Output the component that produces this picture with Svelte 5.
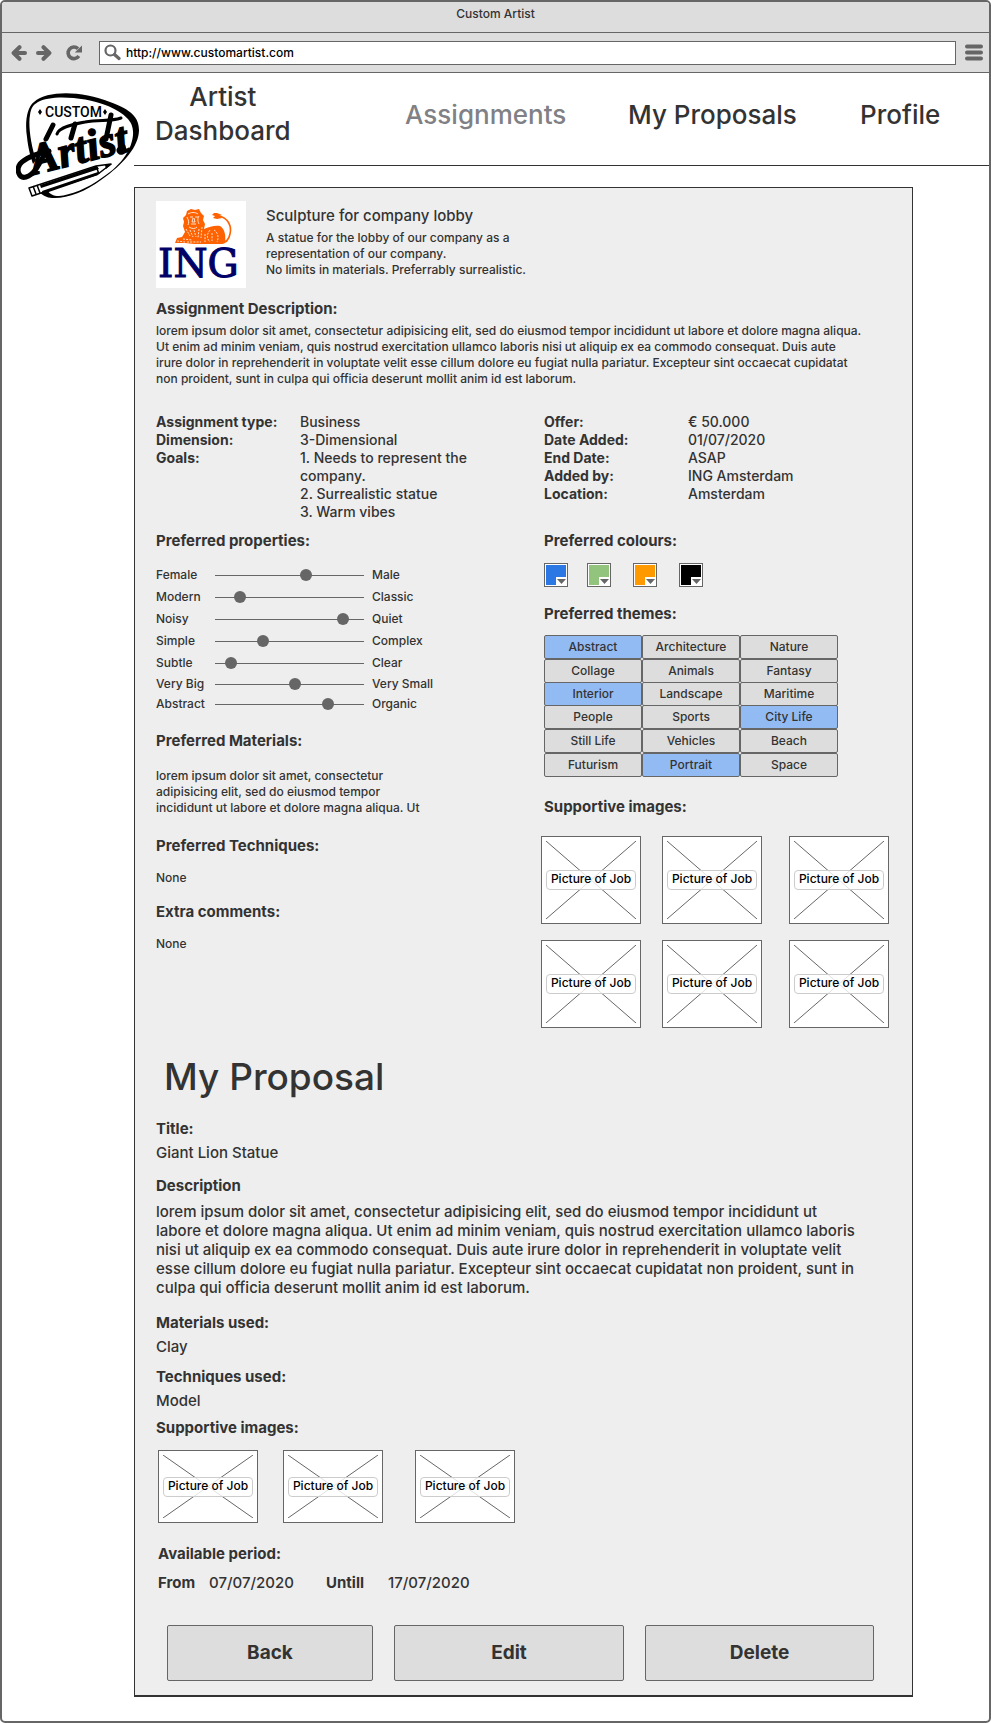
<script>
  const nav = [
    { label: 'Artist\nDashboard' },
    { label: 'Assignments', current: true },
    { label: 'My Proposals' },
    { label: 'Profile' }
  ];

  const details = [
    ['Assignment type:', 'Business'],
    ['Dimension:', '3-Dimensional'],
    ['Goals:', '1. Needs to represent the\ncompany.\n2. Surrealistic statue\n3. Warm vibes']
  ];

  const facts = [
    ['Offer:', '€ 50.000'],
    ['Date Added:', '01/07/2020'],
    ['End Date:', 'ASAP'],
    ['Added by:', 'ING Amsterdam'],
    ['Location:', 'Amsterdam']
  ];

  const sliders = $state([
    { from: 'Female', to: 'Male', value: 62 },
    { from: 'Modern', to: 'Classic', value: 14 },
    { from: 'Noisy', to: 'Quiet', value: 89 },
    { from: 'Simple', to: 'Complex', value: 31 },
    { from: 'Subtle', to: 'Clear', value: 7 },
    { from: 'Very Big', to: 'Very Small', value: 54, tight: true },
    { from: 'Abstract', to: 'Organic', value: 78, tight: true }
  ]);

  const colours = [
    { name: 'Blue', hex: '#2b78e4' },
    { name: 'Green', hex: '#93c47d' },
    { name: 'Orange', hex: '#ff9900' },
    { name: 'Black', hex: '#000000' }
  ];

  const themes = [
    'Abstract', 'Architecture', 'Nature',
    'Collage', 'Animals', 'Fantasy',
    'Interior', 'Landscape', 'Maritime',
    'People', 'Sports', 'City Life',
    'Still Life', 'Vehicles', 'Beach',
    'Futurism', 'Portrait', 'Space'
  ];
  let chosen = $state(['Abstract', 'Interior', 'City Life', 'Portrait']);

  function toggle(theme) {
    chosen = chosen.includes(theme) ? chosen.filter((t) => t !== theme) : [...chosen, theme];
  }

  const brief =
    'lorem ipsum dolor sit amet, consectetur adipisicing elit, sed do eiusmod tempor incididunt ut labore et dolore magna aliqua.\nUt enim ad minim veniam, quis nostrud exercitation ullamco laboris nisi ut aliquip ex ea commodo consequat. Duis aute\nirure dolor in reprehenderit in voluptate velit esse cillum dolore eu fugiat nulla pariatur. Excepteur sint occaecat cupidatat\nnon proident, sunt in culpa qui officia deserunt mollit anim id est laborum.';

  const pitch =
    'lorem ipsum dolor sit amet, consectetur adipisicing elit, sed do eiusmod tempor incididunt ut\nlabore et dolore magna aliqua. Ut enim ad minim veniam, quis nostrud exercitation ullamco laboris\nnisi ut aliquip ex ea commodo consequat. Duis aute irure dolor in reprehenderit in voluptate velit\nesse cillum dolore eu fugiat nulla pariatur. Excepteur sint occaecat cupidatat non proident, sunt in\nculpa qui officia deserunt mollit anim id est laborum.';

  let url = $state('http://www.customartist.com');
</script>

{#snippet picture(low)}
  <div class="picture" class:low>
    <svg class="cross" viewBox="0 0 90 78" preserveAspectRatio="none" aria-hidden="true">
      <path d="M0 0L90 78M90 0L0 78" />
    </svg>
    <span>Picture of Job</span>
  </div>
{/snippet}

<div class="window">
  <div class="titlebar">Custom Artist</div>
  <div class="toolbar">
    <button class="tool" aria-label="Back in history">
      <svg width="16" height="16" viewBox="0 0 16 16"><path class="line" d="M8.500 2.200L2.600 8l5.900 5.800M3 8h11" /></svg>
    </button>
    <button class="tool" aria-label="Forward in history">
      <svg width="16" height="16" viewBox="0 0 16 16"><path class="line" d="M7.500 2.200L13.400 8l-5.900 5.800M13 8H2" /></svg>
    </button>
    <button class="tool reload" aria-label="Reload">
      <svg width="16" height="16" viewBox="0 0 16 16">
        <path class="line thin" d="M12.800 11A5.800 5.800 0 1 1 12 3.700" />
        <path class="solid" d="M16 .5V7.500H8.800z" />
      </svg>
    </button>
    <label class="address">
      <svg width="17" height="17" viewBox="0 0 17 17" aria-hidden="true">
        <circle cx="6.500" cy="6.500" r="5" fill="none" stroke="#666" stroke-width="2.200" />
        <path d="M10.500 10.500l4.500 4" stroke="#666" stroke-width="3.200" stroke-linecap="round" />
      </svg>
      <input type="text" aria-label="Address" bind:value={url} />
    </label>
    <button class="tool" aria-label="Menu">
      <svg width="18" height="17" viewBox="0 0 18 17"><path class="bars" d="M2 2.500h14M2 8.500h14M2 14.500h14" /></svg>
    </button>
  </div>

  <div class="page">
    <svg class="logo" width="124" height="108" viewBox="0 0 124 108" role="img" aria-label="Custom Artist">
      <!-- plectrum outline, heavier along the top right and lower left -->
      <path d="M18 11C10 17 9 34 11 46c1 11 4 21 6 27l3-4C15 54 12 34 14 24c1-7 3-10 8-13C34 4 67 5 92 15c19 9 26 16 25 29-1 13-10 29-30 42-16 12-33 18-44 19-6 0-9-2-12-6l-9 1c4 4 9 7 14 7 14 1 33-6 49-18 23-16 38-34 38-50 0-12-7-20-29-28C66 0 32-1 18 11z" />
      <text class="small" x="29" y="26">CUSTOM</text>
      <path d="M24 18l2 3-2 3-2-3zM89 18l2 3-2 3-2-3z" />
      <text class="script" x="17" y="84" transform="rotate(-14 17 84)">Artist</text>
      <!-- swashes around the wordmark -->
      <path class="swash" d="M33 60C24 62 10 66 4 73c-4 6-1 15 6 13 8-2 13-12 19-24" />
      <path class="swash" d="M37 34L30 48M59 33l-4 14M95 24l-5 24" />
      <path class="swash fine" d="M41 43c2-7 17-10 28-12 14-3 25 0 36-4M108 61c0-5-7-5-6-1 1 4 9 3 6-5" />
      <!-- pencil -->
      <path fill="#fff" stroke="#000" stroke-width="1.500" stroke-linejoin="round" d="M13 97L80 75l15-2-13 10-66 22z" />
      <path d="M24 94l57-19 2 3-58 19zM26 100l56-19v3L27 103z" />
      <path fill="none" stroke="#000" stroke-width="1.500" d="M17 95l3 8M21 94l3 8M80 75l3 8" />
      <path d="M89 74l7-1-6 5z" />
    </svg>

    <nav>
      {#each nav as item}
        <div><a href="#top" class:current={item.current} aria-current={item.current ? 'page' : undefined}>{item.label}</a></div>
      {/each}
    </nav>

    <main>
      <section class="summary">
        <svg width="90" height="87" viewBox="0 0 90 87" role="img" aria-label="ING">
          <rect width="90" height="87" fill="#fff" />
          <g fill="#ff6200">
            <path d="M31 10l4-2 4 1 4-1 2 4 3 3-1 4 2 4-1 5c5-2 11-4 16-3 5 3 6 10 5 17l-3 1H38l-9-1H19l2-5 5-1 3-5-2-6 1-4-1-4 3-3z" />
            <path d="M58 12l3 0 5 2-3 1 3 2-5 1-4-1 2-2-3-1z" />
          </g>
          <path fill="none" stroke="#ff6200" stroke-width="1.600" d="M63 15c9 2 13 10 11 18-1 6-5 9-10 9" />
          <g fill="none" stroke="#fff" stroke-width=".8">
            <path d="M32 13c3-2 7-2 10 0M31 16c2 4 2 6 1 8M43 15c-2 3-1 6 0 8M34 16h3M39 16h3M37 17l-1 4h3l-1-4M35 23h5M33 26c3 2 6 2 8 0" />
            <path stroke-dasharray="2 1.200" d="M30 28l4 7M34 29l3 7M38 29l2 7M43 28l-1 9M46 26l-1 11M27 38l9 1M21 40l8 1M31 41h14M54 29c-4 5-3 9 0 12M58 29c4 2 5 8 3 12M49 33v8M56 32v8" />
          </g>
          <text class="brand" x="2" y="76">ING</text>
        </svg>
        <div class="intro">
          <h1>Sculpture for company lobby</h1>
          <p class="text">{'A statue for the lobby of our company as a\nrepresentation of our company.\nNo limits in materials. Preferrably surrealistic.'}</p>
        </div>
      </section>

      <h2 class="mt11">Assignment Description:</h2>
      <p class="text mt4">{brief}</p>

      <div class="columns details">
        {#each [details, facts] as list}
          <dl>
            {#each list as [term, value]}
              <dt>{term}</dt>
              <dd>{value}</dd>
            {/each}
          </dl>
        {/each}
      </div>

      <div class="columns specs">
        <div>
          <h2>Preferred properties:</h2>
          <div class="sliders">
            {#each sliders as s, i}
              <div class="slider" class:tight={s.tight}>
                <label for="slider-{i}">{s.from}</label>
                <input id="slider-{i}" type="range" min="0" max="100" bind:value={s.value} />
                <span>{s.to}</span>
              </div>
            {/each}
          </div>
          <h2 class="mt17">Preferred Materials:</h2>
          <p class="text mt17">{'lorem ipsum dolor sit amet, consectetur\nadipisicing elit, sed do eiusmod tempor\nincididunt ut labore et dolore magna aliqua. Ut'}</p>
          <h2 class="mt20">Preferred Techniques:</h2>
          <p class="text mt14">None</p>
          <h2 class="mt16">Extra comments:</h2>
          <p class="text mt14">None</p>
        </div>

        <div>
          <h2>Preferred colours:</h2>
          <div class="swatches">
            {#each colours as c}
              <button class="swatch" aria-label={c.name}>
                <svg width="20" height="20" viewBox="0 0 20 20">
                  <path fill={c.hex} d="M0 0h20v12H10v8H0z" />
                  <path fill="#666" d="M11 14h9l-4.500 5z" />
                </svg>
              </button>
            {/each}
          </div>
          <h2 class="mt17">Preferred themes:</h2>
          <div class="themes">
            {#each themes as theme}
              <button aria-pressed={chosen.includes(theme)} onclick={() => toggle(theme)}>{theme}</button>
            {/each}
          </div>
          <h2 class="mt20">Supportive images:</h2>
          <div class="gallery">
            {#each Array(6) as _}
              {@render picture(false)}
            {/each}
          </div>
        </div>
      </div>

      <section class="proposal">
        <h1>My Proposal</h1>
        <h2>Title:</h2>
        <p class="large mt4">Giant Lion Statue</p>
        <h2 class="mt14">Description</h2>
        <p class="large mt6">{pitch}</p>
        <h2 class="mt16">Materials used:</h2>
        <p class="large mt4">Clay</p>
        <h2 class="mt11">Techniques used:</h2>
        <p class="large mt4">Model</p>
        <h2 class="mt8">Supportive images:</h2>
        <div class="gallery strip">
          {#each Array(3) as _}
            {@render picture(true)}
          {/each}
        </div>
        <h2 class="period-title">Available period:</h2>
        <div class="period">
          <b>From</b><span>07/07/2020</span>
          <b>Untill</b><span>17/07/2020</span>
        </div>
      </section>

      <div class="actions">
        <button>Back</button>
        <button>Edit</button>
        <button>Delete</button>
      </div>
    </main>
  </div>
</div>

<style>
  :global(body) {
    margin: 0;
    background: #fff;
  }

  .window {
    box-sizing: border-box;
    border: 2px solid #666;
    border-radius: 5px;
    overflow: hidden;
    background: #fff;
    color: #333;
    font: 500 12px/16px Inter, sans-serif;
  }

  h1, h2, p, dl, dd {
    margin: 0;
  }

  button, input {
    font: inherit;
    color: inherit;
  }

  button {
    padding: 0;
    cursor: pointer;
  }

  .titlebar {
    height: 30px;
    line-height: 24px;
    text-align: center;
    background: #ddd;
    border-bottom: 1px solid #666;
  }

  .toolbar {
    display: flex;
    align-items: center;
    gap: 9px;
    height: 39px;
    padding: 0 6px 0 9px;
    background: #ddd;
    border-bottom: 1px solid #666;
  }

  .tool {
    display: flex;
    border: 0;
    background: none;
  }

  .reload {
    margin: 0 8px 0 5px;
  }

  .line {
    fill: none;
    stroke: #666;
    stroke-width: 4;
    stroke-linejoin: round;
    stroke-linecap: round;
  }

  .thin {
    stroke-width: 3.6;
    stroke-linecap: butt;
  }

  .solid {
    fill: #666;
  }

  .bars {
    stroke: #666;
    stroke-width: 4;
    stroke-linecap: round;
  }

  .address {
    display: flex;
    flex: 1;
    align-items: center;
    gap: 5px;
    height: 22px;
    padding-left: 4px;
    border: 1px solid #666;
    background: #fff;
  }

  .address input {
    flex: 1;
    min-width: 0;
    padding: 1px 0 0;
    border: 0;
    outline: 0;
    background: none;
    color: #000;
  }

  .page {
    position: relative;
    padding: 0 0 24px 132px;
  }

  .logo {
    position: absolute;
    left: 14px;
    top: 18px;
  }

  .small {
    font: 500 14px Roboto, sans-serif;
  }

  .script {
    font: italic 700 44px 'Liberation Serif', serif;
    stroke: #000;
    stroke-width: 1.5;
  }

  .brand {
    font: 400 39px 'DejaVu Serif', serif;
    fill: #006;
    stroke: #006;
    stroke-width: 1;
  }

  .swash {
    fill: none;
    stroke: #000;
    stroke-width: 5;
    stroke-linecap: round;
  }

  .fine {
    stroke-width: 3;
  }

  nav {
    display: grid;
    grid-template-columns: 250fr 223fr 232fr 129fr;
    align-items: center;
    height: 92px;
    padding-left: 21px;
    border-bottom: 1px solid #333;
    font-size: 26px;
    line-height: 34px;
  }

  nav div {
    padding-bottom: 8px;
  }

  nav div:first-child {
    padding-bottom: 10px;
  }

  nav a {
    display: inline-block;
    color: #333;
    text-align: center;
    text-decoration: none;
    white-space: pre-line;
  }

  nav a.current {
    color: #808085;
  }

  main {
    margin: 21px 76px 0 0;
    padding: 13px 20px 14px 21px;
    background: #eee;
    border: 1px solid #333;
    border-bottom-width: 2px;
  }

  .summary {
    display: flex;
    gap: 20px;
  }

  .summary h1 {
    padding-top: 2px;
    font-size: 15px;
    font-weight: 500;
    line-height: 26px;
  }

  .intro .text {
    margin-top: 1px;
  }

  .text, .large, dd {
    white-space: pre-line;
  }

  .large {
    font-size: 15px;
    line-height: 19px;
  }

  h2 {
    font-size: 15px;
    font-weight: 700;
    line-height: 20px;
  }

  .mt4 { margin-top: 4px; }
  .mt6 { margin-top: 6px; }
  .mt8 { margin-top: 8px; }
  .mt11 { margin-top: 11px; }
  .mt14 { margin-top: 14px; }
  .mt16 { margin-top: 16px; }
  .mt17 { margin-top: 17px; }
  .mt20 { margin-top: 20px; }

  .columns {
    display: grid;
    grid-template-columns: 388fr 348fr;
  }

  .details {
    margin-top: 26px;
  }

  dl {
    display: grid;
    grid-template-columns: 144px 1fr;
    align-content: start;
    font-size: 14px;
    line-height: 18px;
  }

  dt {
    font-weight: 700;
  }

  .specs {
    margin-top: 10px;
  }

  .sliders {
    margin-top: 13px;
  }

  .slider {
    display: grid;
    grid-template-columns: 59px 149px 1fr;
    align-items: center;
    height: 22px;
  }

  .slider.tight {
    height: 20px;
  }

  .slider span {
    padding-left: 8px;
  }

  .slider input {
    appearance: none;
    width: 100%;
    height: 12px;
    margin: 0;
    background: linear-gradient(#666, #666) center / 100% 1px no-repeat;
  }

  .slider input::-webkit-slider-thumb {
    appearance: none;
    width: 12px;
    height: 12px;
    border-radius: 50%;
    background: #666;
  }

  .swatches {
    display: grid;
    grid-template-columns: 43px 46px 46px 24px;
    justify-items: start;
    margin-top: 12px;
  }

  .swatch {
    display: flex;
    padding: 1px;
    border: 1px solid #666;
    background: #fff;
  }

  .themes {
    display: grid;
    grid-template-columns: repeat(3, 98px);
    grid-template-rows: 24px 23px 23px 24px 24px 24px;
    margin-top: 11px;
  }

  .themes button {
    height: 24px;
    border: 1px solid #666;
    border-radius: 2px;
    background: #ddd;
  }

  .themes button[aria-pressed='true'] {
    background: #93bbf3;
  }

  .gallery {
    display: grid;
    grid-template-columns: 121px 127px 100px;
    row-gap: 16px;
    margin: 19px 0 0 -3px;
  }

  .strip {
    grid-template-columns: 125px 132px 100px;
    margin: 12px 0 0 2px;
  }

  .picture {
    position: relative;
    display: flex;
    align-items: center;
    box-sizing: border-box;
    width: 100px;
    height: 88px;
    padding: 0 4px;
    border: 1px solid #666;
    background: #fff;
  }

  .picture.low {
    height: 73px;
  }

  .cross {
    position: absolute;
    inset: 4px;
    width: 90px;
    height: calc(100% - 8px);
  }

  .cross path {
    fill: none;
    stroke: #666;
    stroke-width: 1;
    vector-effect: non-scaling-stroke;
  }

  .picture span {
    position: relative;
    flex: 1;
    padding-bottom: 2px;
    border: 1px solid #ccc;
    border-radius: 4px;
    background: rgba(255, 255, 255, 0.8);
    color: #000;
    line-height: 16px;
    text-align: center;
    white-space: nowrap;
  }

  .proposal h1 {
    margin: 25px 0 18px 8px;
    font-size: 37px;
    font-weight: 500;
    line-height: 48px;
  }

  .period-title {
    margin: 21px 0 0 2px;
  }

  .period {
    display: grid;
    grid-template-columns: 51px 117px 62px 1fr;
    margin: 9px 0 0 2px;
    font-size: 15px;
    line-height: 19px;
  }

  .actions {
    display: grid;
    grid-template-columns: 206fr 230fr 229fr;
    gap: 21px;
    margin: 33px 18px 0 11px;
  }

  .actions button {
    height: 56px;
    border: 1px solid #666;
    border-radius: 2px;
    background: #ddd;
    font-size: 19px;
    font-weight: 700;
  }
</style>
